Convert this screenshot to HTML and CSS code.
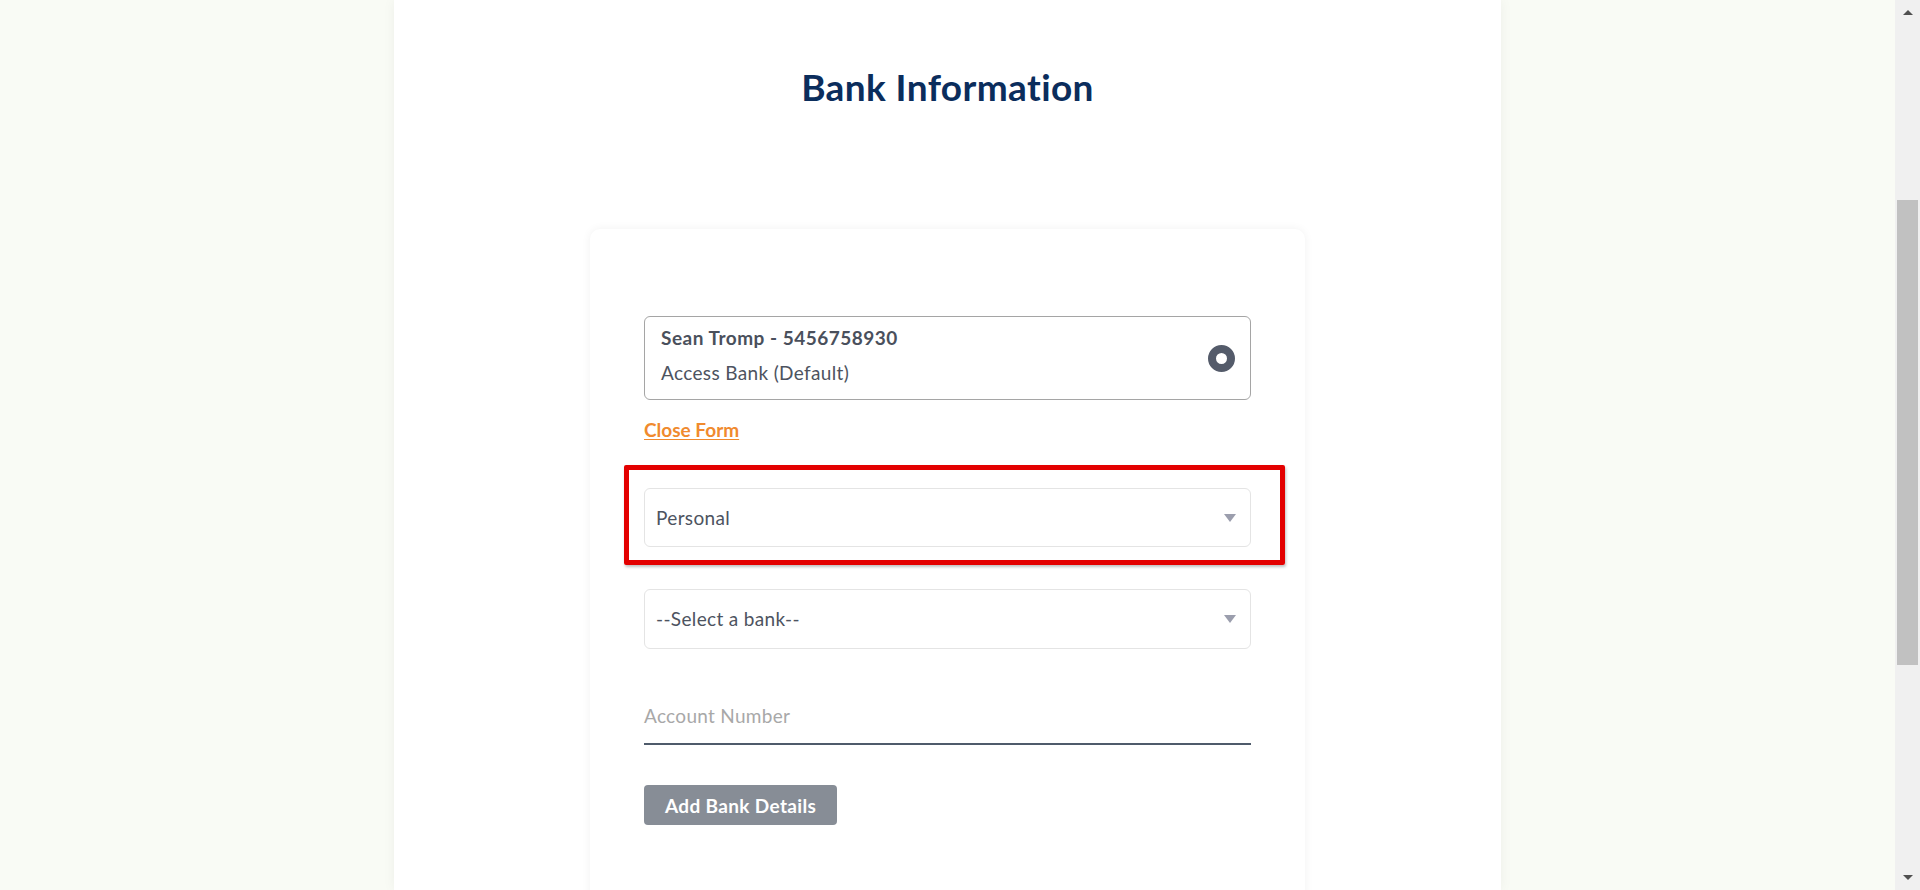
FILE: index.html
```html
<!DOCTYPE html>
<html lang="en">
<head>
<meta charset="utf-8">
<title>Bank Information</title>
<link rel="stylesheet" href="styles.css">
</head>
<body>
<div class="window">
  <div class="viewport">
    <main class="panel">
      <h1 class="title">Bank Information</h1>
      <section class="card">
        <div class="account">
          <div class="account-text">
            <div class="account-name">Sean Tromp - 5456758930</div>
            <div class="account-bank">Access Bank (Default)</div>
          </div>
          <span class="radio"></span>
        </div>
        <a class="close-link" href="#">Close Form</a>
        <div class="highlight">
          <div class="select">
            <span class="select-value">Personal</span>
            <span class="caret"></span>
          </div>
        </div>
        <div class="select select-bank">
          <span class="select-value">--Select a bank--</span>
          <span class="caret"></span>
        </div>
        <div class="field">
          <span class="placeholder">Account Number</span>
        </div>
        <button class="btn" type="button">Add Bank Details</button>
      </section>
    </main>
  </div>
  <div class="scrollbar">
    <span class="arrow arrow-up"></span>
    <div class="track"><div class="thumb"></div></div>
    <span class="arrow arrow-down"></span>
  </div>
</div>
</body>
</html>
```

FILE: styles.css
```css
* { box-sizing: border-box; }
html, body { margin: 0; padding: 0; }
body {
  background: #f9fbf5;
  font-family: "Lato", "Liberation Sans", sans-serif;
  color: #4d5360;
}
.window {
  display: flex;
  height: 890px;
  overflow: hidden;
}
.viewport {
  flex: 1;
  display: flex;
  justify-content: center;
}
.panel {
  width: 1107px;
  background: #ffffff;
  box-shadow: 0 0 12px rgba(0, 0, 0, 0.05);
  display: flex;
  flex-direction: column;
  align-items: center;
  padding-top: 65px;
}
.title {
  margin: 0;
  font-size: 37px;
  line-height: 44px;
  font-weight: 700;
  color: #0b2d5c;
  letter-spacing: 0.4px;
}
.card {
  margin-top: 120px;
  width: 715px;
  background: #ffffff;
  border-radius: 10px;
  box-shadow: 0 0 10px rgba(0, 0, 0, 0.06);
  padding: 87px 54px 120px;
  display: flex;
  flex-direction: column;
  align-items: flex-start;
}
.account {
  width: 100%;
  height: 84px;
  border: 1px solid #a5a5a5;
  border-radius: 6px;
  padding: 10px 15px 0 16px;
  display: flex;
  justify-content: space-between;
  align-items: flex-start;
}
.account-text {
  display: flex;
  flex-direction: column;
  gap: 13px;
}
.account-name, .account-bank {
  font-size: 19px;
  line-height: 22px;
  letter-spacing: 0.35px;
}
.account-name { font-weight: 700; color: #4a505c; letter-spacing: 0.5px; }
.account-bank { color: #4d5360; }
.radio {
  width: 27px;
  height: 27px;
  border-radius: 50%;
  border: 8px solid #545b6a;
  background: #ffffff;
  margin-top: 18px;
}
.close-link {
  margin-top: 19px;
  font-size: 19px;
  line-height: 22px;
  font-weight: 700;
  color: #f08a2e;
  text-decoration: underline;
  text-underline-offset: 2px;
}
.highlight {
  position: relative;
  width: 100%;
  margin-top: 47px;
}
.highlight::after {
  content: "";
  position: absolute;
  top: -23px;
  left: -20px;
  right: -34px;
  bottom: -18px;
  border: 5px solid #e30000;
  border-radius: 2px;
  box-shadow: 1px 2px 3px rgba(0, 0, 0, 0.25);
  pointer-events: none;
}
.select {
  width: 100%;
  height: 59px;
  border: 1px solid #e4e4e4;
  border-radius: 6px;
  display: flex;
  align-items: center;
  justify-content: space-between;
  padding: 0 14px 0 11px;
}
.select-bank {
  margin-top: 42px;
  height: 60px;
}
.select-value {
  font-size: 19px;
  line-height: 22px;
  letter-spacing: 0.35px;
  color: #4d5360;
}
.caret {
  width: 0;
  height: 0;
  border-left: 6.5px solid transparent;
  border-right: 6.5px solid transparent;
  border-top: 8px solid #9b9ead;
}
.field {
  width: 100%;
  margin-top: 56px;
  padding-bottom: 16px;
  border-bottom: 2px solid #4f5b6b;
}
.placeholder {
  display: block;
  font-size: 19px;
  line-height: 22px;
  letter-spacing: 0.3px;
  color: #a8a8a8;
}
.btn {
  margin-top: 40px;
  height: 40px;
  padding: 0 21px;
  border: none;
  border-radius: 4px;
  background: #878d96;
  color: #ffffff;
  font-family: inherit;
  font-size: 19px;
  font-weight: 700;
  letter-spacing: 0.35px;
}
.scrollbar {
  width: 25px;
  background: #f0f0f0;
  display: flex;
  flex-direction: column;
  align-items: center;
}
.arrow {
  width: 0;
  height: 0;
  border-left: 5.5px solid transparent;
  border-right: 5.5px solid transparent;
}
.arrow-up {
  margin-top: 10px;
  border-bottom: 5px solid #505050;
}
.arrow-down {
  margin-bottom: 10px;
  border-top: 5px solid #505050;
}
.track {
  flex: 1;
  width: 100%;
  padding: 185px 2px 0;
}
.thumb {
  height: 465px;
  background: #c1c1c1;
}
```
